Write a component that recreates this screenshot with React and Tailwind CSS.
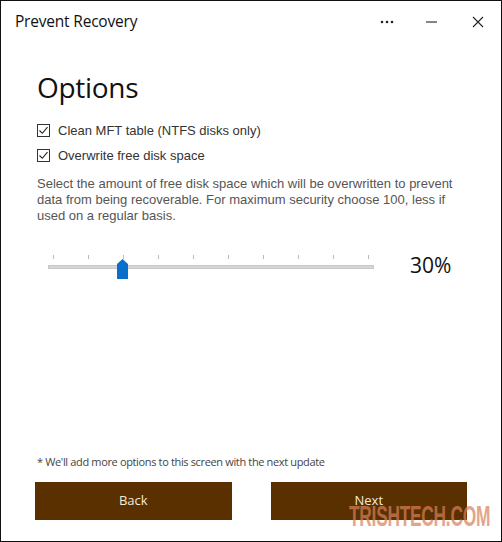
import React from "react";

const ticks = [0, 1, 2, 3, 4, 5, 6, 7, 8, 9];

const Check = ({ label }) => (
  <label className="flex items-center gap-[8px] h-[25px]">
    <span className="w-[13px] h-[13px] border border-[#333] flex items-center justify-center">
      <svg width="11" height="11" viewBox="0 0 11 11">
        <path d="M1.5 5.5 L4.3 8.3 L9.5 2.2" fill="none" stroke="#222" strokeWidth="1.1" />
      </svg>
    </span>
    <span className="text-[13px] text-[#333] font-['Liberation_Sans',sans-serif]">{label}</span>
  </label>
);

const App = () => {
  const value = 30;

  return (
    <div className="relative w-[502px] h-[542px] bg-white border border-[#111] flex flex-col font-['Liberation_Sans',sans-serif] overflow-hidden">
      {/* title bar */}
      <div className="flex items-center h-[42px] pl-[14px]">
        <span className="text-[15.5px] text-[#111] flex-1 font-['Open_Sans',sans-serif] tracking-[-0.2px]">Prevent Recovery</span>
        <div className="flex items-center">
          <div className="w-[44px] flex justify-center">
            <svg width="14" height="4" viewBox="0 0 14 4">
              <circle cx="2" cy="2" r="1.3" fill="#222" />
              <circle cx="7" cy="2" r="1.3" fill="#222" />
              <circle cx="12" cy="2" r="1.3" fill="#222" />
            </svg>
          </div>
          <div className="w-[46px] flex justify-center">
            <svg width="12" height="2" viewBox="0 0 12 2">
              <path d="M0 1 H11" stroke="#222" strokeWidth="1.1" />
            </svg>
          </div>
          <div className="w-[46px] flex justify-center">
            <svg width="12" height="12" viewBox="0 0 12 12">
              <path d="M1 1 L11 11 M11 1 L1 11" stroke="#222" strokeWidth="1.1" />
            </svg>
          </div>
        </div>
      </div>

      {/* content */}
      <div className="flex-1 flex flex-col px-[36px] pt-[26px]">
        <h1 className="text-[28px] leading-[36px] text-[#111] font-['Open_Sans',sans-serif] tracking-[-0.3px] mb-[13px]">Options</h1>
        <Check label="Clean MFT table (NTFS disks only)" />
        <Check label="Overwrite free disk space" />
        <p className="mt-[8px] text-[13px] leading-[16px] text-[#555]">
          Select the amount of free disk space which will be overwritten to prevent data from being recoverable. For maximum security choose 100, less if used on a regular basis.
        </p>

        {/* slider */}
        <div className="flex items-center mt-[23px]">
          <div className="relative w-[326px] h-[30px] ml-[11px]">
            <div className="absolute left-[5px] top-[6px] flex gap-[34px]">
              {ticks.map((t) => (
                <div key={t} className="w-px h-[4px] bg-[#bbb]" />
              ))}
            </div>
            <div className="absolute left-0 right-0 top-[16px] h-[4px] bg-[#d6d6d6] border border-[#c8c8c8]" />
            <svg
              className="absolute top-[10px]"
              style={{ left: 69 + (value - 30) * 3.5 }}
              width="11"
              height="20"
              viewBox="0 0 11 20"
            >
              <path d="M5.5 0 L11 5 V20 H0 V5 Z" fill="#0a6fcc" />
            </svg>
          </div>
          <span className="ml-[36px] text-[21px] text-[#111] font-['Open_Sans',sans-serif] mt-[3px]">{value}%</span>
        </div>

        <div className="flex-1" />
        <p className="text-[11px] text-[#444] mb-[12px] font-['Open_Sans',sans-serif] tracking-[-0.35px]">* We'll add more options to this screen with the next update</p>
      </div>

      {/* buttons */}
      <div className="flex gap-[39px] px-[34px] pb-[21px]">
        <button className="w-[198px] h-[38px] bg-[#5a3000] text-[#f6ead8] text-[13px] font-['Open_Sans',sans-serif]">Back</button>
        <button className="w-[198px] h-[38px] bg-[#5a3000] text-[#f6ead8] text-[13px] font-['Open_Sans',sans-serif]">Next</button>
      </div>

      {/* watermark */}
      <div className="absolute left-[348px] top-[501px] pointer-events-none origin-left scale-x-[0.6] text-[29px] font-black tracking-[-0.5px] text-[#d8805a] opacity-70 leading-none whitespace-nowrap">
        TRISHTECH.COM
      </div>
    </div>
  );
};

export default App;
